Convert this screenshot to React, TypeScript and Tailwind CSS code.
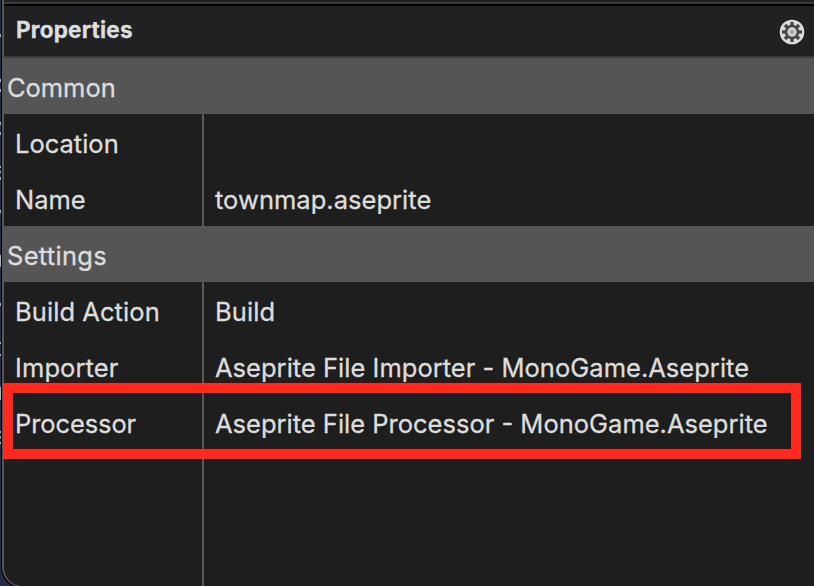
import React from "react";

type RowProps = { label: string; value?: string; labelCls?: string; valueCls?: string };

function Section({ title, cls = "" }: { title: string; cls?: string }) {
  return (
    <div className="flex h-14 shrink-0 items-center bg-[#555555] pl-[3px] pt-1">
      <span className={cls}>{title}</span>
    </div>
  );
}

function Row({ label, value, labelCls = "", valueCls = "" }: RowProps) {
  return (
    <div className="flex h-14 shrink-0">
      <div className="flex w-[200px] items-center border-r-2 border-[#5a5a5a] pl-[11px] pt-1">
        <span className={labelCls}>{label}</span>
      </div>
      <div className="flex flex-1 items-center pl-[11px] pt-1">
        <span className={valueCls}>{value}</span>
      </div>
    </div>
  );
}

function Gear() {
  const teeth = [0, 45, 90, 135, 180, 225, 270, 315];
  return (
    <svg width="26" height="26" viewBox="0 0 26 26">
      <circle cx="13" cy="13" r="12.3" fill="#dcdcdc" />
      <g fill="#48494a">
        <circle cx="13" cy="13" r="7.3" />
        {teeth.map((a) => (
          <rect key={a} x="11.3" y="3" width="3.4" height="4.4" transform={`rotate(${a} 13 13)`} />
        ))}
      </g>
      <circle cx="13" cy="13" r="4.7" fill="#d4d4d4" />
      <circle cx="13" cy="13" r="2.2" fill="#a5a5a5" />
    </svg>
  );
}

/* Text of the window behind, showing past the panel's left edge: [top, height]. */
const behind = [
  [34, 3], [79, 3], [89, 3], [122, 3], [132, 3], [166, 2], [171, 2], [177, 3], [210, 3],
  [255, 12], [303, 3], [342, 2], [354, 2], [387, 13], [431, 2], [436, 2], [442, 2],
];

export default function App() {
  return (
    <div className="relative flex h-[586px] w-[814px] flex-col overflow-hidden bg-[#242b4b] pl-px font-['Inter',sans-serif] text-[25.5px] leading-none whitespace-nowrap text-[#dddddd] [-webkit-text-stroke:0.3px_#dddddd]">
      <div className="flex h-[588px] shrink-0 flex-col overflow-hidden rounded-bl-[20px] bg-black pl-px">
        <div className="flex h-[587px] shrink-0 flex-col overflow-hidden rounded-bl-[20px] border-b border-l-2 border-[#555555] bg-[#1e1e1e]">
          <div className="h-1 shrink-0 border-b-2 border-[#3c3c3c] bg-[#202122]" />
          <div className="h-0.5 shrink-0 bg-black" />
          <div className="flex h-[52px] shrink-0 items-center justify-between border-b-2 border-[#3a3a3a] bg-[#1f2122] pr-[9px] pl-3">
            <span className="pb-px text-[22.5px] font-bold tracking-[0.22px]">Properties</span>
            <div className="pt-0.5">
              <Gear />
            </div>
          </div>
          <Section title="Common" cls="tracking-[-0.05px]" />
          <Row label="Location" />
          <Row label="Name" value="townmap.aseprite" valueCls="tracking-[0.03px]" />
          <Section title="Settings" cls="tracking-[0.3px]" />
          <Row label="Build Action" labelCls="tracking-[0.07px]" value="Build" valueCls="tracking-[0.1px]" />
          <Row
            label="Importer"
            labelCls="tracking-[0.1px]"
            value="Aseprite File Importer - MonoGame.Aseprite"
            valueCls="tracking-[0.02px]"
          />
          <Row
            label="Processor"
            labelCls="tracking-[-0.1px]"
            value="Aseprite File Processor - MonoGame.Aseprite"
          />
          <div className="w-[200px] flex-1 border-r-2 border-[#5a5a5a]" />
        </div>
      </div>
      {behind.map(([top, height]) => (
        <div key={top} className="absolute left-0 w-px bg-[#a9b3bb]" style={{ top, height }} />
      ))}
      <div className="absolute top-[383px] left-[3px] h-[76px] w-[798px] border-[10px] border-[#ff2a1d]" />
    </div>
  );
}
